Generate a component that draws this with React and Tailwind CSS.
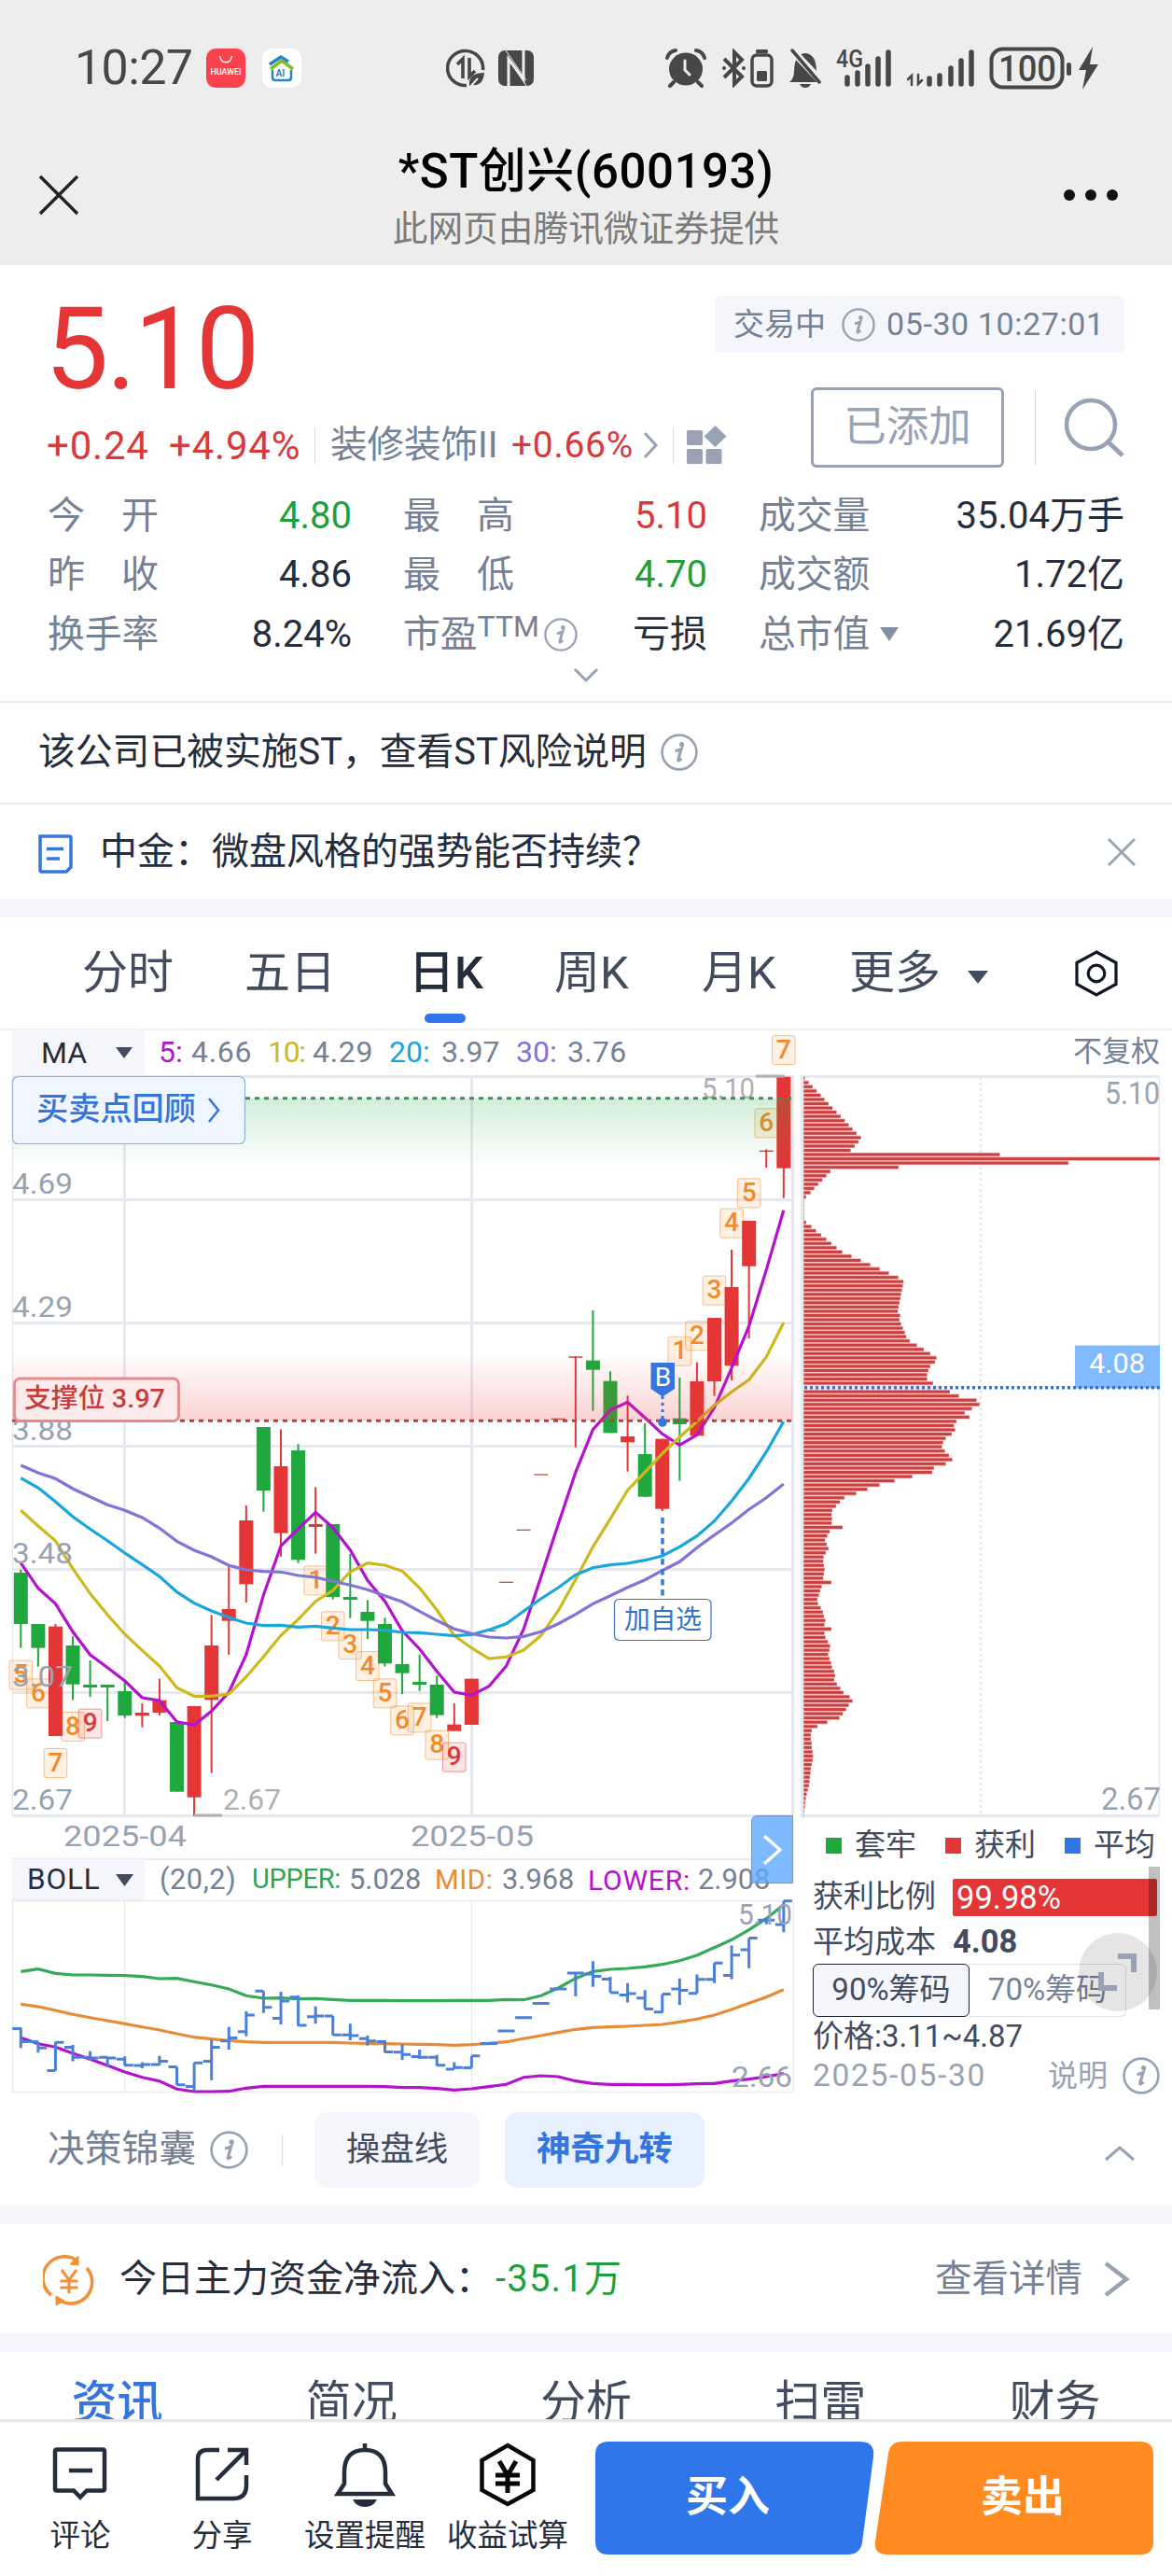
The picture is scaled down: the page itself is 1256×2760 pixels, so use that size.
import React from "react";

const X0 = 22.3;
const STEP = 18.58;
const cx = (i) => X0 + STEP * i;
const py = (u) => 1140 + u / 3;

// kind, body top, body bottom, wick top, wick bottom (thirds of a pixel below y=1140)
const CANDLES = [
  ["g", 1638, 1803, 1628, 1880], ["g", 1803, 1880, 1803, 1940], ["r", 1811, 2163, 1803, 2163],
  ["g", 1872, 1997, 1843, 2047], ["g", 1998, 2007, 1920, 2037], ["g", 1998, 2007, 1998, 2115],
  ["g", 2019, 2097, 1985, 2105], ["r", 2088, 2098, 2058, 2135], ["r", 2048, 2088, 1979, 2097],
  ["g", 2118, 2342, 2118, 2342], ["r", 2067, 2360, 2067, 2420], ["r", 1872, 2047, 1774, 2282],
  ["r", 1755, 1793, 1618, 1902], ["r", 1470, 1675, 1422, 1734], ["g", 1170, 1374, 1170, 1442],
  ["r", 1296, 1511, 1177, 1586], ["g", 1245, 1597, 1225, 1607], ["r", 1482, 1491, 1363, 1577],
  ["g", 1482, 1716, 1482, 1724], ["g", 1716, 1725, 1578, 1784], ["g", 1764, 1793, 1726, 1851],
  ["g", 1803, 1930, 1783, 1940], ["g", 1932, 1961, 1833, 2028], ["g", 1989, 1998, 1901, 2018],
  ["g", 1998, 2096, 1969, 2105], ["r", 2126, 2147, 2058, 2147], ["r", 1979, 2127, 1979, 2127],
  ["d", 1825, 1825, 1825, 1825], ["d", 1669, 1669, 1669, 1669], ["d", 1501, 1501, 1501, 1501],
  ["d", 1323, 1323, 1323, 1323], ["d", 1144, 1144, 1144, 1144], ["t", 945, 945, 942, 1235],
  ["g", 956, 986, 795, 1118], ["g", 1022, 1189, 991, 1189], ["r", 1200, 1219, 1069, 1313],
  ["g", 1257, 1394, 1158, 1394], ["r", 1208, 1433, 1208, 1440], ["g", 1142, 1161, 1011, 1343],
  ["r", 1023, 1198, 962, 1198], ["r", 819, 1023, 819, 1070], ["r", 720, 973, 600, 1020],
  ["r", 507, 653, 507, 885], ["t", 283, 283, 277, 336], ["r", 44, 338, 44, 434],
];

const MA5 = [527, 608, 658, 748, 822, 863, 906, 960, 969, 1037, 1048, 1003, 942, 822, 630, 472, 417, 364, 413, 485, 583, 650, 745, 803, 875, 942, 952, 923, 858, 740, 572, 402, 235, 98, 35, 10, 60, 112, 148, 115, 28, -100, -235, -415, -607];
const MA10 = [358, 408, 456, 545, 625, 694, 756, 808, 858, 928, 955, 955, 948, 893, 828, 760, 708, 650, 615, 555, 527, 534, 553, 607, 678, 760, 800, 834, 829, 807, 760, 680, 580, 475, 385, 293, 235, 175, 122, 72, 20, -23, -62, -135, -246];
const MA20 = [254, 285, 330, 378, 418, 455, 495, 532, 570, 620, 656, 681, 702, 720, 728, 727, 733, 730, 736, 741, 741, 743, 750, 751, 756, 761, 757, 742, 722, 682, 642, 606, 565, 542, 533, 528, 518, 504, 475, 440, 392, 328, 255, 170, 72];
const MA30 = [213, 237, 256, 288, 314, 340, 358, 381, 415, 457, 486, 507, 535, 549, 554, 556, 567, 573, 586, 598, 613, 632, 652, 682, 712, 739, 754, 765, 768, 763, 748, 722, 692, 658, 632, 605, 581, 551, 523, 478, 437, 398, 355, 317, 273];

const UPPER = [520, 512, 526, 531, 531, 532, 533, 536, 543, 542, 553, 563, 576, 598, 606, 605, 608, 607, 610, 613, 613, 613, 614, 614, 614, 613, 613, 613, 610, 611, 598, 573, 542, 520, 513, 510, 505, 497, 485, 468, 443, 418, 386, 350, 305];
const MID = [625, 633, 645, 658, 668, 678, 688, 698, 708, 720, 731, 737, 742, 746, 748, 748, 748, 748, 748, 750, 751, 752, 753, 754, 755, 757, 755, 751, 746, 736, 726, 716, 706, 700, 698, 696, 693, 690, 682, 673, 660, 642, 622, 602, 578];
const LOWER = [733, 752, 763, 783, 802, 822, 843, 860, 872, 898, 906, 906, 905, 895, 889, 889, 889, 889, 889, 889, 889, 890, 893, 893, 896, 901, 897, 890, 883, 860, 855, 858, 872, 880, 883, 883, 884, 884, 883, 881, 880, 872, 866, 858, 848];

// candle index, digit, top edge, highlighted
const BADGES = [
  [0, 5, 1919], [1, 6, 1978], [2, 7, 2202], [3, 8, 2085], [4, 9, 2075, true],
  [17, 1, 1615], [18, 2, 1762], [19, 3, 1821], [20, 4, 1890], [21, 5, 1978],
  [22, 6, 2065], [23, 7, 2056], [24, 8, 2144], [25, 9, 2183, true],
  [38, 1, 878], [39, 2, 829], [40, 3, 683], [41, 4, 467], [42, 5, 370], [43, 6, 145], [44, 7, -90],
];

const CHIPS_UPPER = [68, 80, 93, 106, 119, 131, 144, 157, 170, 183, 196, 209, 221, 234, 248, 240, 228, 215, 695, 1209, 915, 369, 150, 137, 124, 111, 98, 86, 72, 65, 65, 65, 65, 65, 72, 89, 104, 120, 137, 153, 170, 188, 218, 248, 278, 308, 338, 368, 385, 383, 380, 377, 375, 372, 369, 367, 374, 372, 377, 383, 389, 394, 405, 428, 450, 471, 491, 486, 471, 465, 461, 461, 480, 500, 534, 563, 620, 629, 605, 582, 597, 555, 547, 551, 540, 521, 512, 509, 518];
const CHIPS_LOWER = [531, 542, 521, 483, 477, 413, 356, 308, 269, 233, 195, 181, 168, 156, 154, 155, 154, 189, 148, 140, 133, 138, 144, 135, 128, 127, 129, 131, 129, 127, 153, 122, 117, 113, 108, 110, 119, 126, 129, 134, 131, 153, 131, 134, 142, 149, 147, 143, 147, 152, 155, 162, 165, 162, 171, 182, 192, 212, 221, 209, 200, 190, 179, 140, 108, 90, 87, 87, 90, 90, 93, 94, 93, 90, 87, 86, 84, 83, 81, 77, 74, 71, 69, 68, 66, 65];

const RED = "#e43636";
const GREEN = "#1fa83e";
const GRID = "#e8e9ef";

const line = (values, toY) => values.map((v, i) => `${cx(i).toFixed(1)},${toY(v).toFixed(1)}`).join(" ");

function Label({ x, y, w, size = 32, fill = "#98a2b3", weight = 400, children }) {
  return (
    <text x={x} y={y} fontSize={size} fill={fill} fontWeight={weight} textLength={w} lengthAdjust="spacingAndGlyphs">
      {children}
    </text>
  );
}

function InfoIcon({ size, className = "" }) {
  return (
    <svg width={size} height={size} viewBox="0 0 40 40" className={"shrink-0 " + className} fill="none">
      <circle cx="20" cy="20" r="18.4" stroke="#98a2b3" strokeWidth="2.6" />
      <circle cx="22.6" cy="11.6" r="2.6" fill="#98a2b3" />
      <path d="M15.5 18.5c2.4-.2 4.4-.9 6.6-2.2l-3.3 11.6c-.4 1.6.9 1.5 3.6-1.2" stroke="#98a2b3" strokeWidth="3.2" />
    </svg>
  );
}

function StatusBar() {
  const c = "#474747";
  return (
    <div className="h-[146px] flex items-center pl-[80px] text-[#474747] shrink-0">
      <span className="w-[141px] text-[52px] leading-none tracking-[-0.6px]">10:27</span>
      <svg width="42" height="42" viewBox="0 0 42 42" className="shrink-0">
        <rect width="42" height="42" rx="10" fill="#f9424c" />
        <path d="M14.5 8c1.5 9 11.500 9 13 0" stroke="#fff" strokeWidth="1.400" fill="none" />
        <text x="4.500" y="28" fontSize="8.500" fill="#fff" fontWeight="500" textLength="33" lengthAdjust="spacingAndGlyphs">HUAWEI</text>
      </svg>
      <svg width="42" height="42" viewBox="0 0 42 42" className="ml-[18px] shrink-0">
        <rect width="42" height="42" rx="10" fill="#fff" />
        <path d="M8 17 20 9l8 5" stroke="#2484c6" strokeWidth="3.500" fill="none" />
        <path d="m9 22 12-9 12 9" stroke="#84b92f" strokeWidth="3.500" fill="none" />
        <path d="M11 23v8q0 3 3 3h14q3 0 3-3v-8" stroke="#2484c6" strokeWidth="2.500" fill="none" />
        <text x="14.500" y="30" fontSize="10" fill="#2484c6" fontWeight="700">AI</text>
      </svg>
      <svg width="42" height="44" viewBox="0 0 42 44" className="ml-[155px] shrink-0" fill="none" stroke={c}>
        <path d="M22 40.500A19 18.500 0 1 1 39.500 24" strokeWidth="3.600" />
        <path d="M18 33V12l-6 6M25 11v20l6-6" strokeWidth="3.600" />
        <path d="M25 41c-1-10 5-14 16-14-1 10-5 14-13 13z" fill={c} stroke="none" />
        <path d="m25 43 9-10" stroke="#ededed" strokeWidth="2" />
      </svg>
      <svg width="38" height="38" viewBox="0 0 38 38" className="ml-[14px] shrink-0">
        <rect width="38" height="38" rx="7" fill={c} />
        <path d="M11 38V9l16 22V0" stroke="#ededed" strokeWidth="3" fill="none" />
        <path d="M8 0 30 32M10 8l20 30" stroke="#ededed" strokeWidth="1" fill="none" />
      </svg>
      <svg width="44" height="42" viewBox="0 0 44 42" className="ml-[141px] shrink-0" fill="none" stroke={c} strokeLinecap="round">
        <ellipse cx="22" cy="22" rx="18" ry="17.500" fill={c} stroke="none" />
        <path d="M2 10Q4 3 11 2M42 10Q40 3 33 2M9 36l-4 4M35 36l4 4" strokeWidth="4" />
        <path d="M21 13v10l5 5" stroke="#ededed" strokeWidth="3" />
      </svg>
      <svg width="57" height="42" viewBox="0 0 57 42" className="ml-[16px] shrink-0" fill="none" stroke={c}>
        <path d="m3 11 19 19-8 8V4l8 8L3 31" strokeWidth="4" />
        <circle cx="3" cy="21" r="2" fill={c} stroke="none" />
        <circle cx="24" cy="21" r="2" fill={c} stroke="none" />
        <rect x="33" y="7" width="21" height="33" rx="5" strokeWidth="3.500" />
        <rect x="37" y="1" width="13" height="4" rx="1.500" fill={c} stroke="none" />
        <rect x="38" y="24" width="11" height="11" rx="1.500" fill={c} stroke="none" />
      </svg>
      <svg width="38" height="42" viewBox="0 0 38 42" className="ml-[14px] shrink-0">
        <path d="M2 36c7-5 4-14 6-20C9 9 14 5 19 5s10 4 11 11c2 6-1 15 6 20z" fill={c} />
        <path d="M13 38h12q-2 4-6 4t-6-4z" fill={c} />
        <path d="m3 0 33 35" stroke="#ededed" strokeWidth="8" />
        <path d="m5 2 29 34" stroke={c} strokeWidth="3.500" strokeLinecap="round" />
      </svg>
      <svg width="60" height="42" viewBox="0 0 60 42" className="ml-[14px] shrink-0 overflow-visible" stroke={c} strokeWidth="5.500" strokeLinecap="round">
        <text x="0" y="20" fontSize="25" fontWeight="500" fill={c} stroke="none" textLength="29" lengthAdjust="spacingAndGlyphs">4G</text>
        <path d="M12 31v7M23 26v12M34 19v19M45 11v27M56 4v34" />
      </svg>
      <svg width="74" height="42" viewBox="0 0 74 42" className="ml-[16px] shrink-0" stroke={c} strokeWidth="5.500" strokeLinecap="round" fill="none">
        <path d="M5 39V29l-4 4M12 28v10l4-4" strokeWidth="2.500" />
        <path d="M24 32v6M35 29v9M47 21v17M58 13v25M69 4v34" />
      </svg>
      <svg width="90" height="46" viewBox="0 0 90 46" className="ml-[14px] shrink-0" fill="none">
        <rect x="2.500" y="2.500" width="76" height="41" rx="12" stroke={c} strokeWidth="4" />
        <rect x="83" y="17" width="5" height="14" rx="2.500" fill={c} />
        <text x="10" y="36.500" fontSize="38" fill={c} fontWeight="500" textLength="62" lengthAdjust="spacingAndGlyphs">100</text>
      </svg>
      <svg width="22" height="46" viewBox="0 0 22 46" className="ml-[5px] shrink-0">
        <path d="M16 0 1 25h8L5 46 22 19h-9z" fill={c} />
      </svg>
    </div>
  );
}

function TitleBar() {
  return (
    <div className="h-[138px] flex justify-between items-start pl-[41px] pr-[58px]">
      <svg width="44" height="44" viewBox="0 0 44 44" className="mt-[41px]">
        <path d="m2 2 40 40M42 2 2 42" stroke="#222" strokeWidth="3.400" />
      </svg>
      <div className="flex flex-col items-center ml-[31px]">
        <div className="mt-[10px] h-[56px] leading-[56px] text-[51px] font-medium text-black tracking-[0.5px] whitespace-nowrap">*ST创兴(600193)</div>
        <div className="mt-[11px] h-[44px] leading-[44px] text-[37.700px] text-[#7b7b7b]">此网页由腾讯微证券提供</div>
      </div>
      <div className="mt-[57px] flex gap-[11px]">
        <i className="size-[12px] rounded-full bg-[#111]" />
        <i className="size-[12px] rounded-full bg-[#111]" />
        <i className="size-[12px] rounded-full bg-[#111]" />
      </div>
    </div>
  );
}

function Stat({ label, value, color = "text-[#252d3d]", spread, extra }) {
  return (
    <div className="flex items-center justify-between h-[63.500px] text-[40px] leading-none">
      <span className="flex items-center text-[#758195]">
        {spread ? (
          <span className="w-[119px] flex justify-between -ml-px"><span>{label[0]}</span><span>{label[1]}</span></span>
        ) : (
          <span className="text-[39.800px] -ml-px">{label}</span>
        )}
        {extra}
      </span>
      <span className={color}>{value}</span>
    </div>
  );
}

function Quote() {
  return (
    <section className="h-[467px] pl-[52px] pr-[51px] pt-[33px] flex flex-col">
      <div className="flex justify-between h-[187px]">
        <div className="w-[714px] shrink-0">
          <div className="h-[113px] leading-[116px] text-[122px] text-[#e43636] tracking-[-2.500px] -ml-[4px]">5.10</div>
          <div className="flex items-center w-[760px] h-[60px] mt-[17px] text-[42px] whitespace-nowrap text-[#d8393b] -ml-[2px]">
            <span className="w-[131px] tracking-[0.8px]">+0.24</span>
            <span className="w-[156px] tracking-[0.8px]">+4.94%</span>
            <i className="w-px h-[40px] bg-[#d8dbe2]" />
            <span className="w-[210px] pl-[16px] text-[39.500px] text-[#758195]">装修装饰II</span>
            <span className="w-[140px] text-[39px] tracking-[0.7px]">+0.66%</span>
            <svg width="18" height="30" viewBox="0 0 18 30"><path d="m3 2 12 13L3 28" fill="none" stroke="#98a2b3" strokeWidth="3" /></svg>
            <i className="w-px h-[40px] bg-[#d8dbe2] ml-[15px]" />
            <svg width="44" height="42" viewBox="0 0 44 42" className="ml-[14px]" fill="#98a2b3">
              <rect y="5" width="17" height="16" rx="1.500" /><rect y="25" width="17" height="16" rx="1.500" /><rect x="20.500" y="25" width="17" height="16" rx="1.500" />
              <path d="m30.500 0 12 11.500-12 11.500-12-11.500z" />
            </svg>
          </div>
        </div>
        <div className="flex flex-col items-end w-[439px] shrink-0">
          <div className="w-[439px] h-[61px] shrink-0 rounded-[6px] bg-[#f4f6fb] flex items-center pl-[20px] text-[33px] text-[#758195] whitespace-nowrap">
            <span className="w-[116px]">交易中</span>
            <InfoIcon size={36} />
            <span className="ml-[12px] text-[34px] tracking-[0.6px]">05-30 10:27:01</span>
          </div>
          <div className="flex items-center mt-[37px]">
            <div className="w-[207px] h-[86px] border-[3px] border-[#98a2b5] rounded-[6px] text-[#98a2b5] text-[45.500px] flex items-center justify-center">已添加</div>
            <i className="w-px h-[80px] bg-[#d8dbe2] ml-[33px]" />
            <svg width="66" height="64" viewBox="0 0 66 64" className="ml-[30px] mr-[-1px]" fill="none" stroke="#98a2b5" strokeWidth="4.500">
              <circle cx="29" cy="29" r="26" /><path d="m47 47 16 15" strokeWidth="5" />
            </svg>
          </div>
        </div>
      </div>
      <div className="grid grid-cols-[325px_325px_391px] gap-x-[56px] mt-[17px]">
        <Stat label="今开" value="4.80" color="text-[#1f9f3c]" spread />
        <Stat label="最高" value="5.10" color="text-[#d8393b]" spread />
        <Stat label="成交量" value="35.04万手" />
        <Stat label="昨收" value="4.86" spread />
        <Stat label="最低" value="4.70" color="text-[#1f9f3c]" spread />
        <Stat label="成交额" value="1.72亿" />
        <Stat label="换手率" value="8.24%" />
        <Stat label="市盈" value="亏损" extra={<><span className="text-[32px] -mt-[18px] w-[71px]">TTM</span><InfoIcon size={36} /></>} />
        <Stat label="总市值" value="21.69亿" extra={<svg width="20" height="15" viewBox="0 0 20 15" className="ml-[11px]"><path d="M0 0h20L10 15z" fill="#8390a3" /></svg>} />
      </div>
      <svg width="28" height="18" viewBox="0 0 28 18" className="mt-[3px] ml-[562px]"><path d="m2 2 12 12L26 2" fill="none" stroke="#98a2b3" strokeWidth="3" /></svg>
    </section>
  );
}

function Notices() {
  return (
    <>
      <div className="h-[109px] border-t-2 border-[#e8eaee] flex items-center pl-[41px] pb-[2px] text-[39.800px] text-[#252d3d]">
        <span className="w-[667px] whitespace-nowrap">该公司已被实施ST，查看ST风险说明</span>
        <InfoIcon size={40} />
      </div>
      <div className="h-[103px] border-t-2 border-[#e8eaee] flex items-center pl-[41px] pr-[39px] text-[40px] text-[#252d3d]">
        <svg width="37" height="42" viewBox="0 0 37 42" className="mt-[4px]" fill="none" stroke="#3775de" strokeWidth="3.500">
          <path d="M2 2h31q2 0 2 2v31l-5 5H4q-2 0-2-2z" /><path d="M9 15.500h18M9 26h14" />
        </svg>
        <span className="ml-[29px] flex-1 whitespace-nowrap">中金：微盘风格的强势能否持续？</span>
        <svg width="30" height="30" viewBox="0 0 30 30"><path d="m1 1 28 28M29 1 1 29" stroke="#98a2b3" strokeWidth="2.800" /></svg>
      </div>
      <div className="h-[20px] bg-[#f4f6fb]" />
    </>
  );
}

function PeriodTabs() {
  return (
    <div className="h-[121px] flex items-center pl-[88px] text-[49px] text-[#434c5f] whitespace-nowrap border-b-2 border-[#eeeff2]">
      <span className="w-[174px]">分时</span>
      <span className="w-[176px]">五日</span>
      <span className="w-[156px] relative font-medium text-[#252d3d]">
        日K
        <i className="absolute left-[17px] top-[80px] w-[44px] h-[10px] rounded-[5px] bg-[#2f76ea]" />
      </span>
      <span className="w-[158px]">周K</span>
      <span className="w-[158px]">月K</span>
      <span className="w-[127px]">更多</span>
      <svg width="22" height="14" viewBox="0 0 22 14" className="mt-[8px]"><path d="M0 0h22L11 14z" fill="#434c5f" /></svg>
      <svg width="46" height="50" viewBox="0 0 46 50" className="ml-[93px]" fill="none" stroke="#111722" strokeWidth="3.200">
        <path d="M23 2 44 13.500v23L23 48 2 36.500v-23z" /><circle cx="23" cy="25" r="8.800" />
      </svg>
    </div>
  );
}

function MaLegend() {
  return (
    <div className="h-[48px] flex items-center pl-[13px] pb-[2px] text-[32px] text-[#758195] whitespace-nowrap">
      <div className="w-[142px] h-[50px] -mb-[2px] bg-[#f4f6fb] flex items-center pl-[31px] text-[#252d3d]">
        <span className="w-[80px]">MA</span>
        <svg width="18" height="12" viewBox="0 0 18 12"><path d="M0 0h18L9 12z" fill="#434c5f" /></svg>
      </div>
      <span className="ml-[15px] w-[35px] text-[#b512cf]">5:</span><span className="w-[82px] tracking-[0.700px]">4.66</span>
      <span className="w-[48px] text-[#cdb91f] tracking-[-1.300px]">10:</span><span className="w-[82px] tracking-[0.700px]">4.29</span>
      <span className="w-[56px] text-[#17a6dd]">20:</span><span className="w-[80px]">3.97</span>
      <span className="w-[55px] text-[#8273d6]">30:</span><span className="w-[542px] tracking-[0.300px]">3.76</span>
      <span className="text-[31px]">不复权</span>
    </div>
  );
}

function Candle({ c, i }) {
  const [kind, top, bottom, high, low] = c;
  const x = cx(i);
  if (kind === "d") return <path d={`M${x - 7.5} ${py(top)}h15`} stroke="#d04a48" strokeWidth="1.300" />;
  const color = kind === "g" ? GREEN : RED;
  return (
    <g fill={color}>
      <rect x={x - 1} y={py(high)} width="2" height={(low - high) / 3} />
      {kind === "t" ? <rect x={x - 7.500} y={py(top) - 0.700} width="15" height="1.400" /> : <rect x={x - 7.500} y={py(top)} width="15" height={(bottom - top) / 3} />}
    </g>
  );
}

function KChart() {
  const ma = (u) => 1500 + u / 3;
  return (
    <svg width="858" height="840" viewBox="0 1153 858 840" className="block overflow-visible">
      <defs>
        <linearGradient id="pressure" x1="0" y1="0" x2="0" y2="1"><stop stopColor="#22aa44" stopOpacity=".2" /><stop offset="1" stopColor="#22aa44" stopOpacity="0" /></linearGradient>
        <linearGradient id="support" x1="0" y1="0" x2="0" y2="1"><stop stopColor="#e43636" stopOpacity="0" /><stop offset="1" stopColor="#e43636" stopOpacity=".22" /></linearGradient>
      </defs>
      <path d="M13 1154.500H851M13 1286.500H850M13 1418.500H850M13 1550.500H850M13 1682.500H850M13 1814.500H850M13 1946.500H850M133.500 1155V1946M505.500 1155V1946M849.500 1155V1946" stroke={GRID} strokeWidth="3" />
      <path d="M13.500 1155V1946" stroke={GRID} strokeWidth="1.500" />
      {BADGES.map(([i, n, top, hot]) => (
        <g key={i}>
          <rect x={cx(i) - 12.300} y={py(top) + 0.500} width="24.600" height="31" rx="2" fill={hot ? "#e43636" : "#ff8a1f"} fillOpacity=".13" stroke={hot ? "#d8393b" : "#ee8c2c"} strokeOpacity=".5" strokeWidth="1" />
          <text x={cx(i)} y={py(top) + 24.500} textAnchor="middle" fontSize="28" fontWeight="500" fill={hot ? "#d8393b" : "#ee8c2c"}>{n}</text>
        </g>
      ))}
      {CANDLES.map((c, i) => <Candle key={i} c={c} i={i} />)}
      <g fill="none" strokeWidth="3.200">
        <polyline points={line(MA5, ma)} stroke="#b512cf" />
        <polyline points={line(MA10, ma)} stroke="#cdb91f" />
        <polyline points={line(MA20, ma)} stroke="#17a6dd" />
        <polyline points={line(MA30, ma)} stroke="#8273d6" />
      </g>
      <path d="M208 1946h30M810 1154h31" stroke="#b0b0b0" strokeWidth="3" />
      <Label x={239} y={1940} w={62} fill="#b0b0b0">2.67</Label>
      <Label x={752} y={1178} w={57} fill="#b0b0b0">5.10</Label>
      <rect x="13" y="1178" width="836" height="73" fill="url(#pressure)" />
      <rect x="13" y="1450" width="836" height="73" fill="url(#support)" />
      <path d="M13 1177.700H849" stroke="#33964a" strokeWidth="3" strokeDasharray="5 5" />
      <path d="M13 1523.300H849" stroke="#c23c3c" strokeWidth="3" strokeDasharray="5 5" />
      <path d="M710 1497v26" stroke="#3b6fd0" strokeWidth="3" strokeDasharray="3 4" />
      <circle cx="710" cy="1525" r="4.800" fill="#3775de" />
      <path d="M697.500 1461h25.500v28l-13 8.500-12.500-8.500z" fill="#3775de" />
      <text x="710.500" y="1485.500" textAnchor="middle" fontSize="28" fontWeight="400" fill="#fff">B</text>
      <path d="M710 1627v85" stroke="#3b78d4" strokeWidth="3.500" strokeDasharray="6.500 4.500" />
      <rect x="658.500" y="1714.500" width="103.500" height="44" rx="5" fill="#fff" stroke="#3f73bd" strokeWidth="1.200" />
      <Label x={669} y={1745.500} w={83} size={28} fill="#3470cd">加自选</Label>
      {["4.69", "4.29", "3.88", "3.48", "3.07", "2.67"].map((t, i) => <Label key={t} x={13} y={1280 + i * 132} w={65}>{t}</Label>)}
      <rect x="15.500" y="1478" width="176" height="45.500" rx="6" fill="#fdeaea" stroke="#e58a8a" strokeWidth="2.800" />
      <Label x={26} y={1508.500} w={151} size={28} fill="#c93a3a" weight={500}>支撑位 3.97</Label>
      <rect x="13.500" y="1154.500" width="249" height="72" rx="6" fill="#eff6ff" stroke="#8db2dc" strokeWidth="1.200" />
      <Label x={39} y={1200.500} w={171} size={34} fill="#3775d6" weight={500}>买卖点回顾</Label>
      <path d="m224 1178 10 12.500-10 12.500" fill="none" stroke="#3775d6" strokeWidth="2.600" />
      <Label x={68} y={1979} w={132}>2025-04</Label>
      <Label x={440} y={1979} w={132}>2025-05</Label>
      <path d="M13 1993H850" stroke="#e8eaee" strokeWidth="2" />
    </svg>
  );
}

function BollPanel() {
  const by = (u) => 2037.7 + (py(u) - 1154.5) * 0.2573;
  const ly = (u) => 1940 + u / 3;
  return (
    <>
      <div className="h-[44px] flex items-center pl-[13px] text-[30.800px] text-[#758195] whitespace-nowrap">
        <div className="w-[142px] h-full shrink-0 bg-[#f4f6fb] flex items-center pl-[16px] text-[31.500px] text-[#252d3d]">
          <span className="w-[95px] tracking-[0.8px]">BOLL</span>
          <svg width="19" height="13" viewBox="0 0 19 13"><path d="M0 0h19L9.500 13z" fill="#434c5f" /></svg>
        </div>
        <span className="ml-[16px] w-[99px] shrink-0 tracking-[0.500px]">(20,2)</span>
        <span className="w-[104px] shrink-0 text-[29px] text-[#2ea553] tracking-[-0.300px]">UPPER:</span><span className="w-[92px] shrink-0">5.028</span>
        <span className="w-[72px] shrink-0 text-[29.500px] text-[#e98b36] tracking-[0.500px]">MID:</span><span className="w-[92px] shrink-0">3.968</span>
        <span className="w-[118px] shrink-0 text-[30px] text-[#b512cf] tracking-[0.800px]">LOWER:</span><span className="shrink-0">2.908</span>
      </div>
      <svg width="858" height="208" viewBox="0 2037 858 208" className="block overflow-visible">
        <path d="M13.500 2037.500H850V2242.500H13.500zM133.500 2038V2242M505.500 2038V2242" fill="none" stroke="#e8e9ec" strokeWidth="1.300" />
        <g fill="none" strokeWidth="3.200">
          <polyline points={line(UPPER, ly)} stroke="#35aa58" />
          <polyline points={line(MID, ly)} stroke="#e98b36" />
          <polyline points={line(LOWER, ly)} stroke="#b512cf" />
        </g>
        <g fill="none" stroke="#4a80d9" strokeWidth="3">
          {CANDLES.map(([kind, top, bottom, high, low], i) => {
            const open = kind === "g" ? top : bottom;
            const close = kind === "g" ? bottom : top;
            return <path key={i} d={`M${cx(i) - 9} ${by(open)}H${cx(i)}M${cx(i)} ${by(close)}h9M${cx(i)} ${by(high)}V${by(low)}`} />;
          })}
        </g>
        <Label x={791} y={2063} w={58}>5.10</Label>
        <Label x={784} y={2237} w={65}>2.66</Label>
      </svg>
    </>
  );
}

function ChipBars({ values, from, to }) {
  const pitch = (to - from) / (values.length - 1);
  return values.map((v, i) => {
    const y = py(from + i * pitch);
    const w = (v - 63) / 3;
    return (
      <g key={i}>
        <rect x="861" y={y - 2.250} width={w} height="4.500" fill="#f9b4b2" />
        <rect x="861.500" y={y - 1.450} width={Math.max(w - 0.8, 0.3)} height="2.900" fill="#ca3f40" />
      </g>
    );
  });
}

function ChipChart() {
  return (
    <svg width="398" height="796" viewBox="858 1153 398 796" className="block shrink-0">
      <path d="M858 1154.500H1243M858 1946.500H1243" stroke={GRID} strokeWidth="3" />
      <path d="M859.500 1154V1947" stroke={GRID} strokeWidth="3" />
      <path d="M1242.300 1154V1947" stroke={GRID} strokeWidth="1.500" />
      <path d="M1051 1155V1946" stroke="#e6e8ec" strokeWidth="2.800" strokeDasharray="3 3" />
      <ChipBars values={CHIPS_UPPER} from={49} to={1247} />
      <ChipBars values={CHIPS_LOWER} from={1261} to={2418} />
      <path d="M861 1487.700H1152" stroke="#fff" strokeWidth="4.200" strokeOpacity=".85" />
      <rect x="1152" y="1442.500" width="91" height="46" fill="#80baff" />
      <path d="M862 1487.700H1243" stroke="#3a6fcb" strokeWidth="3.400" strokeDasharray="3 3" />
      <Label x={1167} y={1472} w={60} size={29} fill="#fff">4.08</Label>
      <Label x={1184} y={1184} w={59} size={33}>5.10</Label>
      <Label x={1180} y={1940} w={64} size={33}>2.67</Label>
    </svg>
  );
}

function ChipPanel() {
  return (
    <div className="relative w-[398px] h-[296px] pl-[13px] text-[33px] leading-none text-[#434c5f] whitespace-nowrap">
      <div className="h-[56px] flex items-center pl-[14px]">
        <i className="size-[17px] bg-[#1fa83e] mr-[14px] mt-[3px]" /><span className="w-[97px]">套牢</span>
        <i className="size-[17px] bg-[#e43636] mr-[14px] mt-[3px]" /><span className="w-[97px]">获利</span>
        <i className="size-[17px] bg-[#2f76ea] mr-[14px] mt-[3px]" /><span>平均</span>
      </div>
      <div className="h-[54px] flex items-center">
        <span className="w-[150px]">获利比例</span>
        <span className="w-[219px] h-[40px] mt-[4px] rounded-[2px] bg-[#e43636] text-white text-[34.500px] flex items-center pl-[4px]">99.98%</span>
      </div>
      <div className="h-[46px] flex items-center pb-[2px]">
        <span className="w-[150px]">平均成本</span>
        <span className="font-bold text-[34.500px]">4.08</span>
      </div>
      <div className="flex h-[57px]">
        <span className="w-[168px] border-[1.500px] border-[#1b2230] rounded-[6px] bg-[#f4f6fb] flex items-center justify-center pb-[3px]">90%筹码</span>
        <span className="w-[168px] border-y border-r border-[#dfe1e6] rounded-r-[6px] flex items-center justify-center pb-[3px] text-[#758195]">70%筹码</span>
      </div>
      <div className="h-[40px] flex items-center text-[33px]">价格:3.11~4.87</div>
      <div className="h-[46px] flex items-center text-[33.500px] text-[#98a2b3]">
        <span className="w-[252px] tracking-[1.700px]">2025-05-30</span>
        <span className="w-[80px] text-[32px]">说明</span>
        <InfoIcon size={40} />
      </div>
      <i className="absolute left-[373px] top-[52px] w-[12px] h-[153px] bg-black/25" />
      <div className="absolute left-[298px] top-[123px] size-[84px] rounded-full bg-black/10">
        <svg width="84" height="84" viewBox="0 0 84 84" fill="none" stroke="#98a2b5" strokeWidth="6"><path d="M42 25h17v17M24 42v17h17" /></svg>
      </div>
    </div>
  );
}

function Charts() {
  return (
    <div className="relative flex h-[1092px]">
      <div className="w-[858px] shrink-0"><KChart /><BollPanel /></div>
      <div className="w-[398px]"><ChipChart /><ChipPanel /></div>
      <div className="absolute left-[805px] top-[793px] w-[45px] h-[73px] rounded-tl-[6px] border border-[#5b9ce8] bg-[#5fa8ff]/80 flex items-center justify-center">
        <svg width="20" height="32" viewBox="0 0 20 32"><path d="m1 1 17 15L1 31" fill="none" stroke="#fff" strokeWidth="3.400" /></svg>
      </div>
    </div>
  );
}

function Tips() {
  return (
    <div className="h-[119px] flex items-center pl-[51px] pr-[39px] text-[39.800px] text-[#758195] whitespace-nowrap">
      <span className="w-[174px] -mt-[2px]">决策锦囊</span>
      <InfoIcon size={41} />
      <i className="w-px h-[34px] bg-[#d8dbe2] ml-[36px]" />
      <span className="ml-[34px] w-[177px] h-[81px] rounded-[14px] bg-[#f4f6fb] text-[#434c5f] text-[36.500px] flex items-center justify-center">操盘线</span>
      <span className="ml-[27px] w-[214px] h-[81px] rounded-[14px] bg-[#e6f0ff] text-[#3775de] text-[36.500px] font-bold flex items-center justify-center">神奇九转</span>
      <svg width="34" height="18" viewBox="0 0 34 18" className="ml-auto mt-[6px]"><path d="m2 16 15-13 15 13" fill="none" stroke="#98a2b3" strokeWidth="3" /></svg>
    </div>
  );
}

function FundFlow() {
  return (
    <div className="h-[157px] border-y-[20px] border-[#f4f6fb] flex items-center pl-[46px] pr-[44px] text-[40px] whitespace-nowrap">
      <svg width="56" height="56" viewBox="0 0 56 56" className="mt-[4px]" fill="none" stroke="#f0913a" strokeWidth="3.600">
        <path d="M9 43A23 23 0 0 1 37 6.500M47 14a23 23 0 0 1-28 35.500" />
        <path d="M38 1v10l-9-1zM14 54V44l9 5z" fill="#f0913a" strokeWidth="1" />
        <path d="m20 16 8 11 8-11M18.500 28h19M18.500 35h19M28 27v14" strokeWidth="3" />
      </svg>
      <span className="ml-[26px] w-[403px] text-[#252d3d]">今日主力资金净流入：</span>
      <span className="text-[#1f9f3c] tracking-[1.200px]">-35.1万</span>
      <span className="ml-auto text-[39.500px] text-[#758195]">查看详情</span>
      <svg width="30" height="38" viewBox="0 0 30 38" className="ml-[22px]"><path d="m3 2 22 17L3 36" fill="none" stroke="#98a2b3" strokeWidth="4.500" /></svg>
    </div>
  );
}

function ContentTabs() {
  return (
    <div className="h-[72px] overflow-hidden grid grid-cols-5 justify-items-center text-[49px] leading-[109px] text-[#434c5f]">
      <span className="font-medium text-[#3775de]">资讯</span><span>简况</span><span>分析</span><span>扫雷</span><span>财务</span>
    </div>
  );
}

function Tool({ label, width, children }) {
  return (
    <div className={"flex flex-col items-center text-[32.500px] leading-none text-[#252d3d] whitespace-nowrap shrink-0 " + width}>
      <svg width="68" height="70" viewBox="0 0 68 70" fill="none" stroke="#252d3d" strokeWidth="4.500">{children}</svg>
      <span className="mt-[15px]">{label}</span>
    </div>
  );
}

function BottomBar() {
  return (
    <div className="relative h-[167px] border-t-[3px] border-[#e6e7ec] bg-white flex pt-[21px]">
      <Tool label="评论" width="w-[124px] ml-[24px]">
        <path d="M9 8.500h49q2 0 2 2v40q0 2-2 2H41l-7 7-7-7H9q-2 0-2-2v-40q0-2 2-2zM22 31h25" />
      </Tool>
      <Tool label="分享" width="w-[180px]">
        <path d="M31 9H18Q8 9 8 19v42h38q14 0 14-14V36M40 9h20v16M60 9 28 41" />
      </Tool>
      <Tool label="设置提醒" width="w-[126px]">
        <path d="M34 2v7M12 42V33Q12 9 34 9t22 24v9M12 36v9L5 56h58l-7-11v-9" />
        <path d="M21 62h26q-4 8-13 8t-13-8z" fill="#252d3d" stroke="none" />
      </Tool>
      <Tool label="收益试算" width="w-[180px]">
        <path d="M34 4 61.500 20v32L34 67 6.500 52V20z" stroke="#05070a" />
        <path d="m25 21 9 15 9-15M21 36h26M21 45h26M34 35v20" stroke="#05070a" strokeWidth="5" />
      </Tool>
      <div className="relative ml-[4px] mt-0 w-[598px] h-[121px] shrink-0 flex text-white text-[45px] font-bold">
        <svg width="598" height="121" viewBox="0 0 598 121" className="absolute left-0 top-0">
          <path d="M14 0h269q17 0 15 16l-12 92q-2 13-16 13H14q-14 0-14-14V14Q0 0 14 0z" fill="#2f76ea" />
          <path d="M329 0h255q14 0 14 14v93q0 14-14 14H313q-15 0-13-14l14-94q2-13 15-13z" fill="#ff8a1f" />
        </svg>
        <span className="relative w-[284px] flex items-center justify-center pb-[2px]">买入</span>
        <span className="relative w-[314px] flex items-center justify-center pl-[34px] pb-[2px]">卖出</span>
      </div>
    </div>
  );
}

export default function App() {
  return (
    <div className="w-[1256px] h-[2760px] overflow-hidden bg-white font-['Roboto','Noto_Sans_CJK_SC',sans-serif]">
      <header className="h-[284px] bg-[#ededed]"><StatusBar /><TitleBar /></header>
      <Quote />
      <Notices />
      <PeriodTabs />
      <MaLegend />
      <Charts />
      <Tips />
      <FundFlow />
      <ContentTabs />
      <BottomBar />
    </div>
  );
}
